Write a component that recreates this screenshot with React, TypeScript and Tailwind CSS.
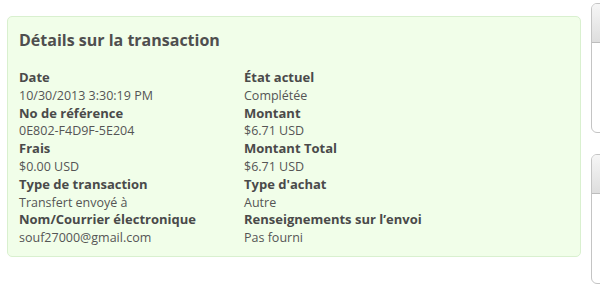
const rows: [string, string, string, string][] = [
  ["Date", "10/30/2013 3:30:19 PM", "État actuel", "Complétée"],
  ["No de référence", "0E802-F4D9F-5E204", "Montant", "$6.71 USD"],
  ["Frais", "$0.00 USD", "Montant Total", "$6.71 USD"],
  ["Type de transaction", "Transfert envoyé à", "Type d'achat", "Autre"],
  ["Nom/Courrier électronique", "souf27000@gmail.com", "Renseignements sur l’envoi", "Pas fourni"],
];

function Field({ label, value }: { label: string; value: string }) {
  return (
    <div className="flex flex-col">
      <span className="text-[13px] font-bold text-[#4a4a4a]">{label}</span>
      <span className="text-[12.5px] text-[#555555]">{value}</span>
    </div>
  );
}

function SidePanel() {
  return (
    <div className="w-[200px] h-[130px] rounded-tl-[6px] rounded-bl-[6px] border border-[#c4c4c4] bg-white overflow-hidden">
      <div className="h-[39px] border-b border-[#bdbdbd] bg-gradient-to-b from-[#f6f6f6] to-[#dedede]" />
    </div>
  );
}

export default function App() {
  return (
    <div
      className="w-[600px] h-[293px] overflow-hidden bg-white flex"
      style={{ fontFamily: '"Open Sans", "DejaVu Sans", sans-serif' }}
    >
      {/* Transaction details */}
      <div className="pl-[7px] pt-[16px] shrink-0">
        <div className="w-[574px] h-[241px] rounded-[5px] border border-[#d9f0cf] bg-[#f1fee9] px-[11px] pt-[11px]">
          <h2 className="text-[16px] leading-[24px] font-bold text-[#4f4f4f]">Détails sur la transaction</h2>
          <div className="mt-[17px] grid grid-cols-[225px_1fr] leading-[17.8px]">
            {rows.map(([l1, v1, l2, v2]) => (
              <div key={l1} className="contents">
                <Field label={l1} value={v1} />
                <Field label={l2} value={v2} />
              </div>
            ))}
          </div>
        </div>
      </div>

      {/* Side widgets (cut off) */}
      <div className="ml-[10px] pt-[3px] flex flex-col gap-[21px] shrink-0">
        <SidePanel />
        <SidePanel />
      </div>
    </div>
  );
}
